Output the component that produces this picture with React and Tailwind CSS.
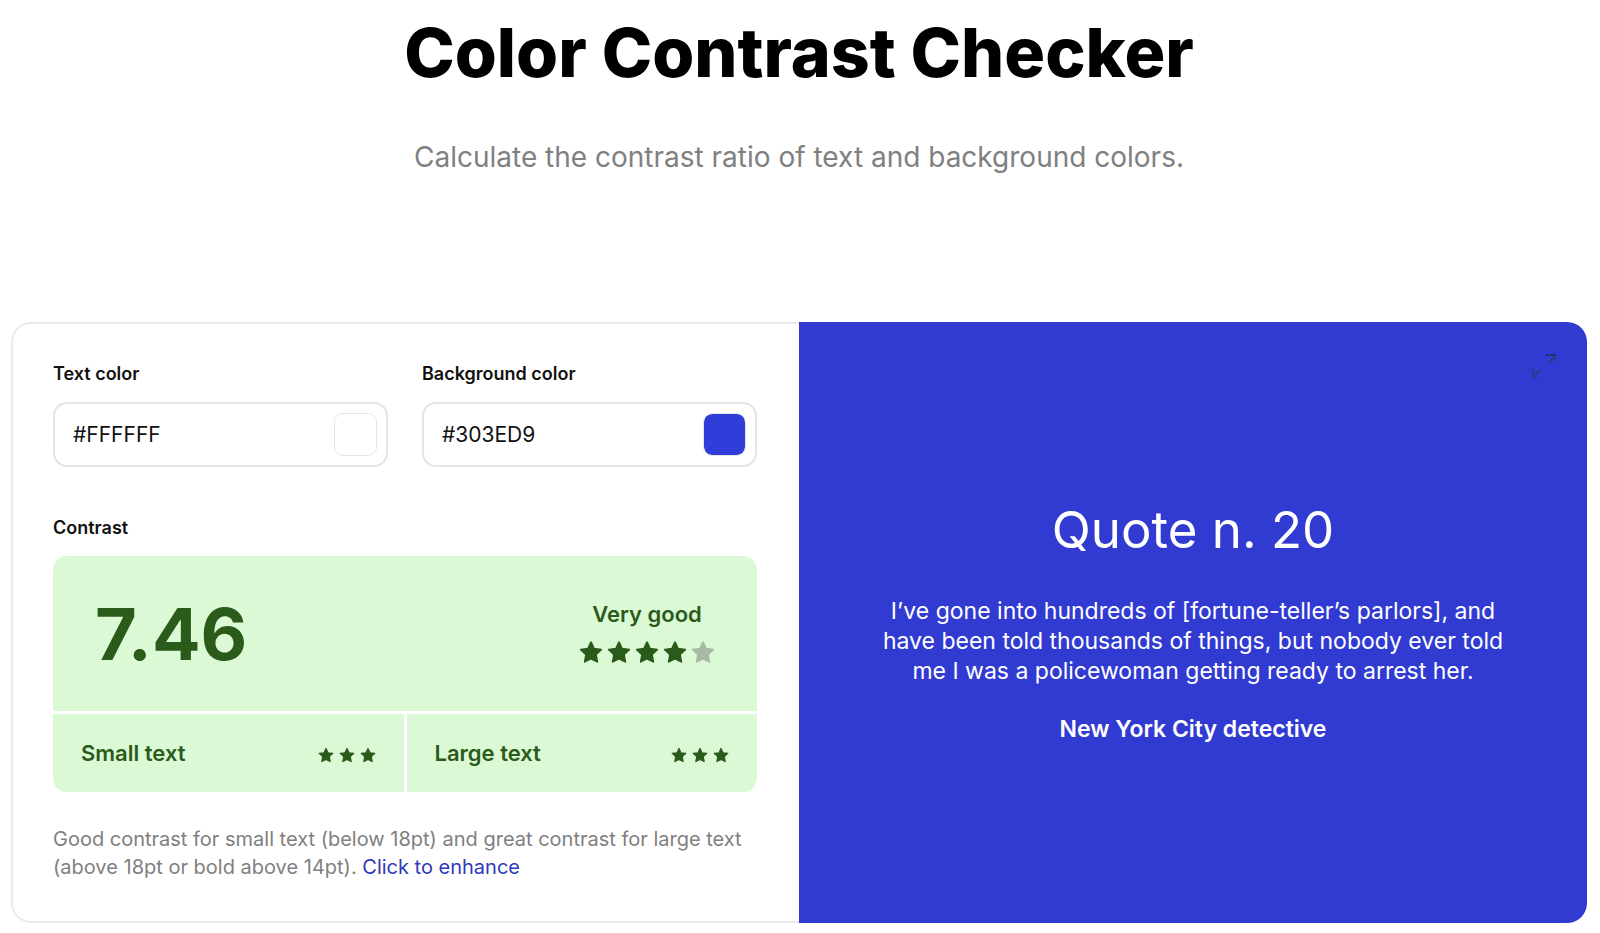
import { useState } from "react";

const Star = ({ className }) => (
  <svg viewBox="0 0 24 24" className={className} fill="currentColor" stroke="currentColor" strokeWidth="1.8" strokeLinejoin="round" aria-hidden="true">
    <path d="M12 2.2l3 6.5 7.2.9-5.3 4.9 1.4 7.3-6.3-3.2-6.3 3.2 1.4-7.3-5.3-4.9 7.2-.9z" />
  </svg>
);

const ColorField = ({ id, label, value, onChange }) => (
  <div className="flex min-w-0 flex-1 flex-col gap-4">
    <label htmlFor={id} className="text-lg font-semibold leading-6 text-[#111]">
      {label}
    </label>
    <div className="flex h-[65px] items-center rounded-[14px] border-2 border-[#e4e4e4] pl-[18px] pr-[9px]">
      <input
        id={id}
        type="text"
        value={value}
        onChange={(e) => onChange(e.target.value)}
        className="min-w-0 flex-1 bg-transparent text-[21px] text-[#111] outline-none"
      />
      <input
        type="color"
        aria-label={`Pick ${label.toLowerCase()}`}
        value={value.toLowerCase()}
        onChange={(e) => onChange(e.target.value.toUpperCase())}
        className="size-[43px] cursor-pointer appearance-none rounded-[9px] border border-black/10 bg-transparent [&::-webkit-color-swatch-wrapper]:p-0 [&::-webkit-color-swatch]:rounded-lg [&::-webkit-color-swatch]:border-none"
      />
    </div>
  </div>
);

const SizeRating = ({ label }) => (
  <div className="flex flex-1 items-center justify-between bg-[#dbf9d4] px-7">
    <span className="text-[22px] font-semibold">{label}</span>
    <span className="flex gap-[5px] pt-1">
      {[1, 2, 3].map((n) => (
        <Star key={n} className="size-4" />
      ))}
    </span>
  </div>
);

export default function App() {
  const [textColor, setTextColor] = useState("#FFFFFF");
  const [bgColor, setBgColor] = useState("#303ED9");

  return (
    <main className="bg-white pb-[10px] pl-[11px] pr-[13px] font-['Inter',sans-serif]">
      <header className="flex flex-col items-center text-center">
        <h1 className="pt-2 text-[68px] font-extrabold leading-[88px] text-black">Color Contrast Checker</h1>
        <p className="pt-[43px] text-[28px] leading-9 text-[#808080]">
          Calculate the contrast ratio of text and background colors.
        </p>
      </header>

      <div className="mt-[147px] grid min-h-[601px] grid-cols-2">
        <section className="flex flex-col rounded-l-[20px] border-2 border-r-0 border-[#ebebeb] pb-10 pl-10 pr-[42px] pt-[38px]">
          <div className="flex gap-[34px]">
            <ColorField id="text-color" label="Text color" value={textColor} onChange={setTextColor} />
            <ColorField id="bg-color" label="Background color" value={bgColor} onChange={setBgColor} />
          </div>

          <h2 className="mt-[49px] text-lg font-semibold leading-6 text-[#111]">Contrast</h2>
          <div className="mt-4 flex flex-col gap-[3px] overflow-hidden rounded-[14px] text-[#2b5b1b]">
            <div className="flex h-[155px] items-center justify-between bg-[#dbf9d4] px-[42px]">
              <strong className="text-[72px] font-bold leading-none">7.46</strong>
              <div className="flex flex-col items-center gap-3 pb-1">
                <span className="text-[22px] font-semibold leading-7">Very good</span>
                <span className="flex gap-1">
                  {[1, 2, 3, 4].map((n) => (
                    <Star key={n} className="size-6" />
                  ))}
                  <Star className="size-6 text-[#a8baa6]" />
                </span>
              </div>
            </div>
            <div className="flex h-[78px] gap-[3px]">
              <SizeRating label="Small text" />
              <SizeRating label="Large text" />
            </div>
          </div>

          <p className="mt-[33px] text-[20px] leading-7 text-[#808080]">
            Good contrast for small text (below 18pt) and great contrast for large text (above 18pt or bold above 14pt).{" "}
            <a href="#enhance" className="text-[#303ab9]">
              Click to enhance
            </a>
          </p>
        </section>

        <section className="relative flex flex-col items-center justify-center rounded-r-[20px] bg-[#313bd2] px-20 pb-1 text-center text-white">
          <button type="button" aria-label="Full screen" className="absolute right-[29px] top-[30px] text-[#2c3a78]">
            <svg viewBox="0 0 28 28" className="size-7" fill="none" stroke="currentColor" strokeWidth="1.5">
              <path d="M16 3h3M20 3h6" stroke="#20264f" />
              <path d="M25 4v6M24 5l-6 6" />
              <path d="M3 16v11M4 25l6-7M9 26h1M12 26h1" />
            </svg>
          </button>
          <h2 className="text-[51px] leading-[64px]">Quote n. 20</h2>
          <p className="mt-[34px] text-[23px] leading-[30px]">
            I’ve gone into hundreds of [fortune-teller’s parlors], and have been told thousands of things, but nobody ever told me I was a
            policewoman getting ready to arrest her.
          </p>
          <p className="mt-7 text-[23px] font-semibold leading-[30px]">New York City detective</p>
        </section>
      </div>
    </main>
  );
}
